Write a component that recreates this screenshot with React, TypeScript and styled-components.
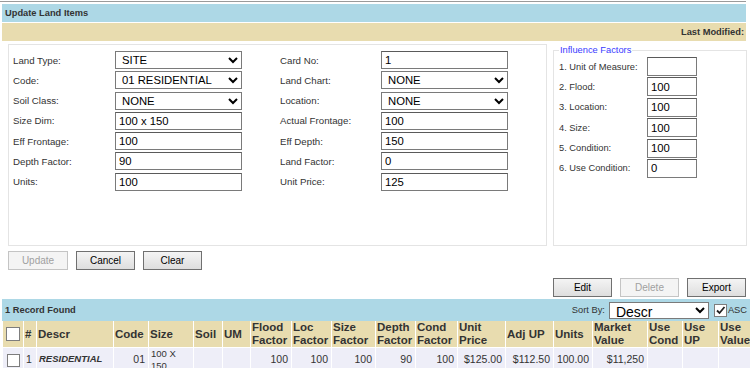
import React from 'react'
import styled, { createGlobalStyle } from 'styled-components'

const GlobalStyle = createGlobalStyle`
  body {
    margin: 0;
    background: #fff;
    font-family: "Liberation Sans", Arial, sans-serif;
    color: #333;
  }
`

const Page = styled.div`
  width: 750px;
  height: 368px;
  overflow: hidden;
  padding-top: 1px;
  box-sizing: border-box;
`

const TopRule = styled.div`
  width: 746px;
  height: 1px;
  background: #9a9a9a;
`

const TitleBar = styled.div`
  margin: 2px 4px 0 2px;
  height: 18px;
  background: #add8e6;
  padding-left: 3px;
  display: flex;
  align-items: center;
  font-size: 9.3px;
  font-weight: bold;
  color: #333;
`

const ModifiedBar = styled.div`
  margin: 1px 4px 0 2px;
  height: 18px;
  background: #e8dcaf;
  padding-right: 2px;
  display: flex;
  align-items: center;
  justify-content: flex-end;
  font-size: 9.3px;
  font-weight: bold;
  color: #333;
`

const Panels = styled.div`
  display: flex;
  align-items: flex-start;
  gap: 6px;
  margin: 3px 0 0 8px;
`

const MainPanel = styled.div`
  width: 539px;
  height: 202px;
  box-sizing: border-box;
  border: 1px solid #e4e4e4;
  padding: 6px 0 0 4px;
`

const FormGrid = styled.div`
  display: grid;
  grid-template-columns: 102px 127px 38px 101px 127px;
  row-gap: 2.3px;
  align-items: center;
`

const Label = styled.label<{ $fs?: number }>`
  font-size: ${p => p.$fs ?? 9.7}px;
  color: #333;
  white-space: nowrap;
`

const Gap = styled.span``

const TextBox = styled.input<{ $w?: number; $h?: number }>`
  width: ${p => p.$w ?? 127}px;
  height: ${p => p.$h ?? 18}px;
  box-sizing: border-box;
  border: 1px solid #7a7a7a;
  border-top-color: #5a5a5a;
  padding: 0 3px;
  margin: 0;
  font-family: "Liberation Sans", Arial, sans-serif;
  font-size: 11.3px;
  color: #000;
  background: #fff;
  outline: none;
`

const Select = styled.select<{ $w?: number; $h?: number; $fs?: number }>`
  width: ${p => p.$w ?? 127}px;
  height: ${p => p.$h ?? 18}px;
  box-sizing: border-box;
  border: 1px solid #7a7a7a;
  border-radius: 0;
  padding: 0 0 0 2px;
  margin: 0;
  font-family: "Liberation Sans", Arial, sans-serif;
  font-size: ${p => p.$fs ?? 11.3}px;
  color: #000;
  background: #fff;
`

const Fieldset = styled.fieldset`
  width: 194px;
  height: 202px;
  box-sizing: border-box;
  margin: 0;
  border: 1px solid #e4e4e4;
  padding: 0 5px;
`

const Legend = styled.legend`
  font-size: 9.3px;
  line-height: 12px;
  color: #3a3aff;
  padding: 0 1px;
  margin-left: 0;
`

const InfluenceGrid = styled.div`
  display: grid;
  grid-template-columns: 88px 50px;
  row-gap: 1.4px;
  align-items: center;
  margin-top: 1px;
`

const ButtonRow = styled.div<{ $right?: boolean }>`
  display: flex;
  gap: 8px;
  justify-content: ${p => (p.$right ? 'flex-end' : 'flex-start')};
  padding: ${p => (p.$right ? '0 4px 0 0' : '0 0 0 8px')};
  margin-top: ${p => (p.$right ? 8 : 5)}px;
`

const Button = styled.button<{ $w?: number }>`
  width: ${p => p.$w ?? 59}px;
  height: 19px;
  box-sizing: border-box;
  padding: 0;
  border: 1px solid #707070;
  background: linear-gradient(#f4f4f4, #dedede);
  font-family: "Liberation Sans", Arial, sans-serif;
  font-size: 10px;
  color: #000;

  &:disabled {
    border-color: #c4c4c4;
    background: #f4f4f4;
    color: #a0a0a0;
  }
`

const RecordBar = styled.div`
  margin: 2px 0 0 2px;
  height: 22px;
  background: #add8e6;
  display: flex;
  align-items: center;
  padding: 0 3px 0 3px;
  font-size: 9.3px;
  color: #333;
`

const RecordTitle = styled.span`
  font-weight: bold;
  flex: 1;
`

const SortLabel = styled.span`
  font-size: 9.3px;
  margin-right: 4px;
`

const Check = styled.span<{ $size?: number }>`
  display: inline-flex;
  align-items: center;
  justify-content: center;
  width: ${p => p.$size ?? 13}px;
  height: ${p => p.$size ?? 13}px;
  box-sizing: border-box;
  border: 1px solid #7d7d7d;
  background: #fff;
  vertical-align: middle;
`

const AscLabel = styled.span`
  display: inline-flex;
  align-items: center;
  gap: 1px;
  margin-left: 5px;
  font-size: 9.3px;
`

const Table = styled.table`
  margin-left: 2px;
  width: 750px;
  table-layout: fixed;
  border-collapse: collapse;
  font-family: "Liberation Sans", Arial, sans-serif;
`

const HeadCell = styled.th<{ $pad?: number }>`
  background: #e8dcaf;
  border: 1px solid #fff;
  border-top: 0;
  height: 26px;
  padding: 0 0 0 ${p => p.$pad ?? 1}px;
  text-align: left;
  vertical-align: middle;
  font-size: 11.5px;
  line-height: 13px;
  font-weight: bold;
  color: #333;
  overflow: hidden;
`

const Cell = styled.td<{ $align?: 'left' | 'right'; $em?: boolean; $pad?: number }>`
  background: #eeeef8;
  border: 1px solid #fff;
  height: 26px;
  padding: ${p => (p.$align === 'right' ? '5px 3px 0 0' : `5px 0 0 ${p.$pad ?? 2}px`)};
  text-align: ${p => p.$align ?? 'left'};
  vertical-align: top;
  font-size: ${p => (p.$em ? 9.5 : 10.5)}px;
  line-height: 12px;
  color: #333;
  font-weight: ${p => (p.$em ? 'bold' : 'normal')};
  font-style: ${p => (p.$em ? 'italic' : 'normal')};
  overflow: hidden;
  white-space: nowrap;
`

const WrapCell = styled(Cell)`
  white-space: normal;
  padding-top: 0;
  font-size: 9.5px;
  line-height: 12px;
`

const CheckMark = () => (
  <svg width="11" height="11" viewBox="0 0 11 11">
    <path d="M2 5.5 L4.5 8 L9.5 2" fill="none" stroke="#222" strokeWidth="1.8" />
  </svg>
)

const leftFields: [string, 'text' | 'select', string][] = [
  ['Land Type:', 'select', 'SITE'],
  ['Code:', 'select', '01 RESIDENTIAL'],
  ['Soil Class:', 'select', 'NONE'],
  ['Size Dim:', 'text', '100 x 150'],
  ['Eff Frontage:', 'text', '100'],
  ['Depth Factor:', 'text', '90'],
  ['Units:', 'text', '100'],
]

const rightFields: [string, 'text' | 'select', string][] = [
  ['Card No:', 'text', '1'],
  ['Land Chart:', 'select', 'NONE'],
  ['Location:', 'select', 'NONE'],
  ['Actual Frontage:', 'text', '100'],
  ['Eff Depth:', 'text', '150'],
  ['Land Factor:', 'text', '0'],
  ['Unit Price:', 'text', '125'],
]

const influence: [string, string][] = [
  ['1. Unit of Measure:', ''],
  ['2. Flood:', '100'],
  ['3. Location:', '100'],
  ['4. Size:', '100'],
  ['5. Condition:', '100'],
  ['6. Use Condition:', '0'],
]

const columns: [string, number][] = [
  ['', 21],
  ['#', 13],
  ['Descr', 77],
  ['Code', 35],
  ['Size', 45],
  ['Soil', 29],
  ['UM', 28],
  ['Flood Factor', 41],
  ['Loc Factor', 40],
  ['Size Factor', 44],
  ['Depth Factor', 40],
  ['Cond Factor', 42],
  ['Unit Price', 48],
  ['Adj UP', 48],
  ['Units', 39],
  ['Market Value', 55],
  ['Use Cond', 35],
  ['Use UP', 36],
  ['Use Value', 34],
]

const Field = ({ kind, value }: { kind: 'text' | 'select'; value: string }) =>
  kind === 'select' ? (
    <Select defaultValue={value}>
      <option>{value}</option>
    </Select>
  ) : (
    <TextBox defaultValue={value} />
  )

export default function App() {
  return (
    <Page>
      <GlobalStyle />
      <TopRule />
      <TitleBar>Update Land Items</TitleBar>
      <ModifiedBar>Last Modified:</ModifiedBar>

      <Panels>
        <MainPanel>
          <FormGrid>
            {leftFields.map(([label, kind, value], i) => (
              <React.Fragment key={label}>
                <Label>{label}</Label>
                <Field kind={kind} value={value} />
                <Gap />
                <Label>{rightFields[i][0]}</Label>
                <Field kind={rightFields[i][1]} value={rightFields[i][2]} />
              </React.Fragment>
            ))}
          </FormGrid>
        </MainPanel>

        <Fieldset>
          <Legend>Influence Factors</Legend>
          <InfluenceGrid>
            {influence.map(([label, value]) => (
              <React.Fragment key={label}>
                <Label $fs={9.3}>{label}</Label>
                <TextBox $w={50} $h={19} defaultValue={value} />
              </React.Fragment>
            ))}
          </InfluenceGrid>
        </Fieldset>
      </Panels>

      <ButtonRow>
        <Button $w={60} disabled>Update</Button>
        <Button>Cancel</Button>
        <Button>Clear</Button>
      </ButtonRow>

      <ButtonRow $right>
        <Button>Edit</Button>
        <Button disabled>Delete</Button>
        <Button>Export</Button>
      </ButtonRow>

      <RecordBar>
        <RecordTitle>1 Record Found</RecordTitle>
        <SortLabel>Sort By:</SortLabel>
        <Select $w={100} $h={17} $fs={14} defaultValue="Descr">
          <option>Descr</option>
        </Select>
        <AscLabel>
          <Check>
            <CheckMark />
          </Check>
          ASC
        </AscLabel>
      </RecordBar>

      <Table>
        <colgroup>
          {columns.map(([, w], i) => (
            <col key={i} style={{ width: w }} />
          ))}
        </colgroup>
        <thead>
          <tr>
            {columns.map(([name], i) => (
              <HeadCell key={i} $pad={i === 0 ? 3 : 1}>
                {i === 0 ? <Check $size={14} /> : name}
              </HeadCell>
            ))}
          </tr>
        </thead>
        <tbody>
          <tr>
            <Cell $pad={4}>
              <Check />
            </Cell>
            <Cell>1</Cell>
            <Cell $em>RESIDENTIAL</Cell>
            <Cell $align="right">01</Cell>
            <WrapCell>100 X 150</WrapCell>
            <Cell />
            <Cell />
            <Cell $align="right">100</Cell>
            <Cell $align="right">100</Cell>
            <Cell $align="right">100</Cell>
            <Cell $align="right">90</Cell>
            <Cell $align="right">100</Cell>
            <Cell $align="right">$125.00</Cell>
            <Cell $align="right">$112.50</Cell>
            <Cell $align="right">100.00</Cell>
            <Cell $align="right">$11,250</Cell>
            <Cell />
            <Cell />
            <Cell />
          </tr>
        </tbody>
      </Table>
    </Page>
  )
}
